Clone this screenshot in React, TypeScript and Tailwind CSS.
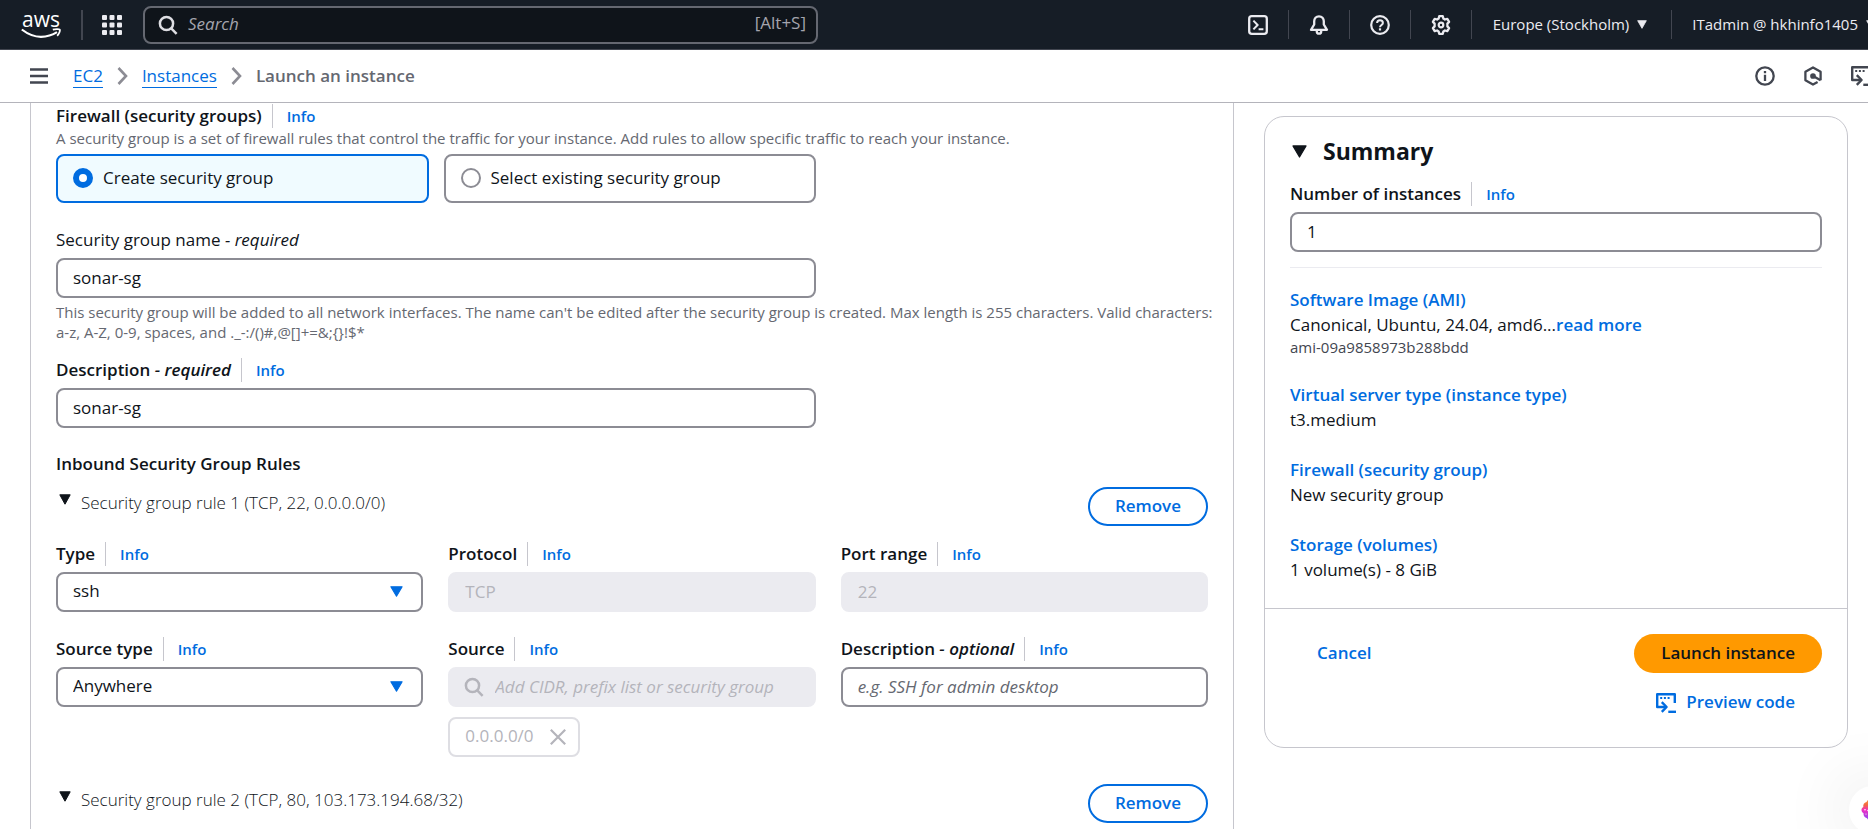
import React, { useId, useState } from "react";

type IconProps = { className?: string };

const Triangle = ({ className }: IconProps) => (
  <svg viewBox="0 0 12 11" preserveAspectRatio="none" className={className} fill="currentColor" stroke="currentColor" strokeWidth="1" strokeLinejoin="round" aria-hidden="true">
    <path d="M.8.8h10.4L6 10.2z" />
  </svg>
);

const SearchIcon = ({ className }: IconProps) => (
  <svg viewBox="0 0 20 20" className={className} fill="none" stroke="currentColor" strokeWidth="2.5" aria-hidden="true">
    <circle cx="8.5" cy="8.5" r="6.6" />
    <path d="M13 13.2l5.6 5.6" />
  </svg>
);

const GridIcon = ({ className }: IconProps) => (
  <svg viewBox="0 0 20 20" className={className} fill="currentColor" aria-hidden="true">
    {[0, 7.5, 15].map((y) => [0, 7.5, 15].map((x) => <rect key={`${x}-${y}`} x={x} y={y} width="5" height="5" rx="1" />))}
  </svg>
);

const ShellIcon = ({ className }: IconProps) => (
  <svg viewBox="0 0 20 20" className={className} fill="none" stroke="currentColor" strokeWidth="2.3" aria-hidden="true">
    <rect x="1.2" y="1.2" width="17.6" height="17.6" rx="2.6" />
    <path d="M5.4 5.6L9.6 10l-4.2 4.4M10.6 14.2h4.8" strokeWidth="2" />
  </svg>
);

const BellIcon = ({ className }: IconProps) => (
  <svg viewBox="0 0 20 20" className={className} fill="none" stroke="currentColor" strokeWidth="2.3" strokeLinejoin="round" aria-hidden="true">
    <path d="M10 1.3c-3 0-4.8 2.2-4.8 5v3.2L2 14.8h16l-3.2-5.3V6.3c0-2.8-1.8-5-4.8-5z" />
    <path d="M7.8 15.5v.9c0 1.2 1 2.2 2.2 2.2s2.2-1 2.2-2.2v-.9" />
  </svg>
);

const HelpIcon = ({ className }: IconProps) => (
  <svg viewBox="0 0 20 20" className={className} fill="none" stroke="currentColor" strokeWidth="2.2" aria-hidden="true">
    <circle cx="10" cy="10" r="8.8" />
    <path d="M7.1 8.1c0-1.7 1.3-2.8 2.9-2.8s2.9 1.1 2.9 2.6c0 2-2.9 2.2-2.9 4.4" strokeWidth="2" />
    <path d="M10 13.3v2.2" strokeWidth="2.2" />
  </svg>
);

const GearIcon = ({ className }: IconProps) => (
  <svg viewBox="0 0 20 20" className={className} fill="none" stroke="currentColor" strokeWidth="2.3" strokeLinejoin="round" aria-hidden="true">
    <path d="M8.2 1.2h3.6l.6 2.4 1.5.9 2.4-.7 1.8 3.1-1.7 1.7v2.8l1.7 1.7-1.8 3.1-2.4-.7-1.5.9-.6 2.4H8.2l-.6-2.4-1.5-.9-2.4.7-1.8-3.1 1.7-1.7V8.6L1.9 6.9l1.8-3.1 2.4.7 1.5-.9z" />
    <circle cx="10" cy="10" r="2.3" strokeWidth="2.2" />
  </svg>
);

const InfoIcon = ({ className }: IconProps) => (
  <svg viewBox="0 0 20 20" className={className} fill="none" stroke="currentColor" strokeWidth="2.3" aria-hidden="true">
    <circle cx="10" cy="10" r="8.7" />
    <path d="M10 8.8v6.2M10 5v2.2" />
  </svg>
);

const HexIcon = ({ className }: IconProps) => (
  <svg viewBox="0 0 20 20" className={className} fill="none" stroke="currentColor" strokeWidth="2.3" strokeLinejoin="round" aria-hidden="true">
    <path d="M17.6 14.3V5.7L10 1.4 2.4 5.7v8.6l7.6 4.3 4.6-2.6" />
    <path d="M10 10l7.600 4.300" />
    <circle cx="10" cy="10" r="1.7" fill="currentColor" />
  </svg>
);

const CodeIcon = ({ className }: IconProps) => (
  <svg viewBox="0 0 20 20" className={className} fill="none" stroke="currentColor" strokeWidth="2.4" strokeLinejoin="round" aria-hidden="true">
    <path d="M18.8 10V1.2H1.2V14h8.600" />
    <path d="M5.8 9.2l4.8 4.8-4.8 4.8" />
    <path d="M12.3 18.8H20" />
    <path d="M4.2 5h2M7.9 5h2M11.6 5h2" strokeWidth="2.2" />
  </svg>
);

const Chevron = ({ className }: IconProps) => (
  <svg viewBox="0 0 11 18" className={className} fill="none" stroke="currentColor" strokeWidth="2.6" aria-hidden="true">
    <path d="M1.5 1L9 9l-7.5 8" />
  </svg>
);

const Hamburger = ({ className }: IconProps) => (
  <svg viewBox="0 0 18 16" className={className} stroke="currentColor" strokeWidth="2.4" aria-hidden="true">
    <path d="M0 1.5h18M0 8h18M0 14.5h18" />
  </svg>
);

const CloseIcon = ({ className }: IconProps) => (
  <svg viewBox="0 0 16 16" className={className} stroke="currentColor" strokeWidth="2.2" aria-hidden="true">
    <path d="M.8.8l14.4 14.4M15.2.8L.8 15.2" />
  </svg>
);

const Logo = () => (
  <a href="#home" aria-label="AWS home" className="flex w-10 flex-col items-center text-white">
    <span className="text-[21px] leading-[18px] font-medium">aws</span>
    <svg viewBox="0 0 40 11" className="h-[11px] w-10" fill="none" stroke="currentColor" aria-hidden="true">
      <path d="M.8 1.5C6 5.5 12.5 8.8 20 8.8c5.5 0 11.5-1.7 16-4.6" strokeWidth="2.2" />
      <path d="M31.8 1.7c2.5-.8 6.3-.9 6.9-.1s-.4 4.3-2.6 6.2" strokeWidth="1.8" />
    </svg>
  </a>
);

const Info = () => (
  <a href="#info" className="border-l border-[#c6c6cd] pl-3.5 text-[15px] leading-6 font-semibold text-[#006ce0]">
    Info
  </a>
);

const boxBase = "block h-10 w-full rounded-lg border-2 px-[15px] pb-0.5 text-[17px] leading-6";
const boxOn = "border-[#8c8c94] bg-white text-[#0f141a] placeholder:italic placeholder:text-[#656871]";
const boxOff = "border-[#ebebf0] bg-[#ebebf0] text-[#b4b4bb] placeholder:italic placeholder:text-[#b4b4bb]";

type FieldProps = {
  label: string;
  note?: string;
  light?: boolean;
  info?: boolean;
  value?: string;
  placeholder?: string;
  disabled?: boolean;
  search?: boolean;
  options?: string[];
};

function Field({ label, note, light, info = true, value, placeholder, disabled, search, options }: FieldProps) {
  const id = useId();
  return (
    <div className="flex min-w-0 flex-col gap-[7px]">
      <div className="flex h-[23px] items-center gap-2.5">
        <label htmlFor={id} className={light ? "text-[17px] leading-[25px]" : "text-[17px] leading-[25px] font-semibold"}>
          {label}
          {note && <i> - {note}</i>}
        </label>
        {info && <Info />}
      </div>
      <div className="relative">
        {options ? (
          <>
            <select id={id} className={`${boxBase} ${boxOn} appearance-none`}>
              {options.map((o) => (
                <option key={o}>{o}</option>
              ))}
            </select>
            <Triangle className="pointer-events-none absolute top-3.5 right-5 h-[11px] w-[13px] text-[#006ce0]" />
          </>
        ) : (
          <>
            {search && <SearchIcon className="absolute top-2.5 left-4 size-5 text-[#b4b4bb]" />}
            <input
              id={id}
              type="text"
              defaultValue={value}
              placeholder={placeholder}
              disabled={disabled}
              className={`${boxBase} ${disabled ? boxOff : boxOn} ${search ? "pl-[45px]" : ""}`}
            />
          </>
        )}
      </div>
    </div>
  );
}

function Tile({ label, checked, onSelect }: { label: string; checked: boolean; onSelect: () => void }) {
  return (
    <label
      className={`flex h-[49px] items-center gap-2.5 rounded-lg border-2 px-[15px] pb-0.5 text-[17px] ${
        checked ? "border-[#006ce0] bg-[#f0fbff]" : "border-[#8c8c94] bg-white"
      }`}
    >
      <input
        type="radio"
        name="security-group-mode"
        checked={checked}
        onChange={onSelect}
        className="size-5 appearance-none rounded-full border-2 border-[#8c8c94] bg-white checked:border-[6px] checked:border-[#006ce0]"
      />
      {label}
    </label>
  );
}

function RuleHeader({ title }: { title: string }) {
  return (
    <div className="flex items-start justify-between">
      <button type="button" className="flex items-start gap-2.5 pt-[3px] pl-[3px] text-[17px] leading-[25px] font-light">
        <Triangle className="mt-1 h-[11px] w-3" />
        {title}
      </button>
      <button type="button" className="h-[39px] rounded-[20px] border-2 border-[#006ce0] px-[25px] pb-0.5 text-[17px] font-semibold text-[#006ce0]">
        Remove
      </button>
    </div>
  );
}

function SummaryItem({ title, children, extra }: { title: string; children: React.ReactNode; extra?: string }) {
  return (
    <div className="text-[17px] leading-[25px]">
      <a href="#section" className="font-semibold text-[#006ce0]">
        {title}
      </a>
      <p>{children}</p>
      {extra && <p className="text-[15px] leading-5 text-[#424650]">{extra}</p>}
    </div>
  );
}

function HeaderAction({ label, children }: { label: string; children: React.ReactNode }) {
  return (
    <button type="button" aria-label={label} className="flex h-[29px] items-center border-r border-[#424650] px-5">
      {children}
    </button>
  );
}

export default function App() {
  const [mode, setMode] = useState("create");
  return (
    <div className="flex h-screen flex-col overflow-hidden bg-white font-['Open_Sans','Noto_Sans',sans-serif] text-[#0f141a]">
      <header className="flex h-[50px] shrink-0 items-center border-b border-[#424650] bg-[#161d26] pl-[21px] text-[#ebebf0]">
        <Logo />
        <span className="ml-5 h-[30px] border-l-2 border-[#424650]" />
        <button type="button" aria-label="All services" className="ml-[19px]">
          <GridIcon className="size-5" />
        </button>
        <div className="relative ml-[21px] w-[675px] shrink-0">
          <SearchIcon className="absolute top-[9px] left-[15px] size-5 text-[#dedee3]" />
          <input
            type="search"
            aria-label="Search"
            placeholder="Search"
            className="h-[38px] w-full rounded-lg border-2 border-[#656871] bg-[#0f141a] pr-24 pb-0.5 pl-[43px] text-[17px] placeholder:text-[#a4a4ad] placeholder:italic"
          />
          <span className="absolute top-[5px] right-3 text-[17px] leading-6 text-[#a4a4ad]">[Alt+S]</span>
        </div>
        <nav className="-mr-2 ml-auto flex shrink-0 items-center">
          <HeaderAction label="CloudShell"><ShellIcon className="size-5" /></HeaderAction>
          <HeaderAction label="Notifications"><BellIcon className="size-5" /></HeaderAction>
          <HeaderAction label="Support"><HelpIcon className="size-5" /></HeaderAction>
          <HeaderAction label="Settings"><GearIcon className="size-5" /></HeaderAction>
          <button type="button" className="flex h-[29px] items-center gap-2 border-r border-[#424650] pr-6 pl-[21px] text-[15px] font-medium">
            Europe (Stockholm)
            <Triangle className="h-[9px] w-[10px]" />
          </button>
          <button type="button" className="flex items-center gap-2 pl-5 text-[15px] font-medium">
            ITadmin @ hkhinfo1405
            <Triangle className="h-[9px] w-[10px]" />
          </button>
        </nav>
      </header>

      <div className="flex h-[53px] shrink-0 items-center border-b border-[#b4b4bb] pl-[30px] text-[#424650]">
        <button type="button" aria-label="Open navigation">
          <Hamburger className="h-4 w-[18px]" />
        </button>
        <nav aria-label="Breadcrumb" className="ml-[25px] flex items-center gap-3.5 text-[17px] leading-6">
          <a href="#ec2" className="border-b border-[#006ce0] leading-[22px] text-[#006ce0]">EC2</a>
          <Chevron className="h-[18px] w-[11px] text-[#8c8c94]" />
          <a href="#instances" className="border-b border-[#006ce0] leading-[22px] text-[#006ce0]">Instances</a>
          <Chevron className="h-[18px] w-[11px] text-[#8c8c94]" />
          <span className="font-semibold text-[#656871]">Launch an instance</span>
        </nav>
        <div className="-mr-[3px] ml-auto flex shrink-0 gap-7">
          <button type="button" aria-label="Info panel"><InfoIcon className="size-5" /></button>
          <button type="button" aria-label="Assistant"><HexIcon className="size-5" /></button>
          <button type="button" aria-label="Code panel"><CodeIcon className="size-5" /></button>
        </div>
      </div>

      <div className="flex min-h-0 flex-1 gap-[30px] pr-5 pl-[30px]">
        <main className="min-w-0 flex-1 border-x border-[#c6c6cd] px-[25px]">
          <div className="flex h-[25px] items-center gap-2.5">
            <h3 className="text-[17px] leading-[25px] font-semibold">Firewall (security groups)</h3>
            <Info />
          </div>
          <p className="text-[15px] leading-5 text-[#656871]">
            A security group is a set of firewall rules that control the traffic for your instance. Add rules to allow specific traffic to reach your instance.
          </p>
          <div className="mt-1.5 grid w-2/3 grid-cols-2 gap-[15px] pr-2">
            <Tile label="Create security group" checked={mode === "create"} onSelect={() => setMode("create")} />
            <Tile label="Select existing security group" checked={mode === "existing"} onSelect={() => setMode("existing")} />
          </div>

          <div className="mt-[25px] w-2/3 pr-2">
            <Field label="Security group name" note="required" light info={false} value="sonar-sg" />
          </div>
          <p className="mt-1 text-[15px] leading-5 whitespace-nowrap text-[#656871]">
            This security group will be added to all network interfaces. The name can't be edited after the security group is created. Max length is 255 characters. Valid characters:
            <br />
            {"a-z, A-Z, 0-9, spaces, and ._-:/()#,@[]+=&;{}!$*"}
          </p>
          <div className="mt-4 w-2/3 pr-2">
            <Field label="Description" note="required" value="sonar-sg" />
          </div>

          <h3 className="mt-[23px] mb-[11px] text-[17px] leading-[25px] font-semibold">Inbound Security Group Rules</h3>
          <RuleHeader title="Security group rule 1 (TCP, 22, 0.0.0.0/0)" />
          <div className="mt-4 grid grid-cols-3 items-start gap-[25px]">
            <Field label="Type" options={["ssh"]} />
            <Field label="Protocol" value="TCP" disabled />
            <Field label="Port range" value="22" disabled />
            <Field label="Source type" options={["Anywhere"]} />
            <div>
              <Field label="Source" placeholder="Add CIDR, prefix list or security group" disabled search />
              <div className="mt-2.5 inline-flex h-10 items-center gap-4 rounded-lg border-2 border-[#dedee3] pr-3 pl-[15px] text-[17px] text-[#b4b4bb]">
                <span className="pb-0.5">0.0.0.0/0</span>
                <button type="button" aria-label="Remove 0.0.0.0/0" disabled>
                  <CloseIcon className="size-4" />
                </button>
              </div>
            </div>
            <Field label="Description" note="optional" placeholder="e.g. SSH for admin desktop" />
          </div>
          <div className="mt-[27px]">
            <RuleHeader title="Security group rule 2 (TCP, 80, 103.173.194.68/32)" />
          </div>
        </main>

        <aside className="mt-[13px] w-[584px] shrink-0 self-start rounded-[20px] border border-[#c6c6cd]">
          <div className="px-[25px] pt-[19px] pb-[26px]">
            <button type="button" className="flex items-center gap-4 pl-0.5">
              <Triangle className="h-[13px] w-[15px]" />
              <h2 className="text-[23px] leading-[30px] font-bold">Summary</h2>
            </button>
            <div className="mt-4 border-b border-[#ebebf0] pb-[15px]">
              <Field label="Number of instances" value="1" />
            </div>
            <div className="mt-[19px] flex flex-col gap-[25px]">
              <SummaryItem title="Software Image (AMI)" extra="ami-09a9858973b288bdd">
                Canonical, Ubuntu, 24.04, amd6...
                <a href="#more" className="font-semibold text-[#006ce0]">read more</a>
              </SummaryItem>
              <SummaryItem title="Virtual server type (instance type)">t3.medium</SummaryItem>
              <SummaryItem title="Firewall (security group)">New security group</SummaryItem>
              <SummaryItem title="Storage (volumes)">1 volume(s) - 8 GiB</SummaryItem>
            </div>
          </div>
          <div className="flex items-start justify-between border-t border-[#c6c6cd] p-[25px] text-[17px] font-semibold text-[#006ce0]">
            <button type="button" className="h-[39px] px-[27px] pb-0.5">Cancel</button>
            <div className="flex flex-col items-end gap-2.5">
              <button type="button" className="h-[39px] rounded-[20px] bg-[#ff9900] px-[27px] pb-0.5 text-[#0f141a]">Launch instance</button>
              <button type="button" className="flex h-[39px] items-center gap-2.5 px-[27px]">
                <CodeIcon className="size-5" />
                <span className="pb-0.5">Preview code</span>
              </button>
            </div>
          </div>
        </aside>
      </div>

      <button
        type="button"
        aria-label="Open assistant"
        className="fixed -right-[29px] -bottom-[5px] flex size-12 items-center justify-center rounded-full bg-white shadow-[0_0_70px_rgba(0,0,0,0.16)]"
      >
        <svg viewBox="0 0 24 24" className="size-6" aria-hidden="true">
          <defs>
            <linearGradient id="assistant" x1="0" y1="0" x2="0" y2="1">
              <stop offset="0" stopColor="#ff9a3c" />
              <stop offset=".28" stopColor="#f2693f" />
              <stop offset=".5" stopColor="#f02fc2" />
              <stop offset="1" stopColor="#7b4dff" />
            </linearGradient>
          </defs>
          <path fill="url(#assistant)" d="M12 .5c-3.5 0-5.5 1.5-6.5 3.5-2.5.5-3.5 2.8-3.2 5C.8 10 .5 11 .5 12s.5 2.5 2 3.3c-.2 2.7 1.2 4.5 3.5 4.9 1 2 3 3.3 6 3.300s5-1.300 6-3.300c2.300-.4 3.700-2.200 3.500-4.900 1.500-.8 2-2.300 2-3.300s-.3-2-1.800-3c.3-2.200-.7-4.500-3.200-5-1-2-3-3.500-6.500-3.500z" />
          <circle cx="4" cy="11.8" r=".8" fill="#fff" />
          <circle cx="7" cy="12.5" r=".8" fill="#fff" />
          <circle cx="5" cy="16" r=".6" fill="#fff" />
        </svg>
      </button>
    </div>
  );
}
